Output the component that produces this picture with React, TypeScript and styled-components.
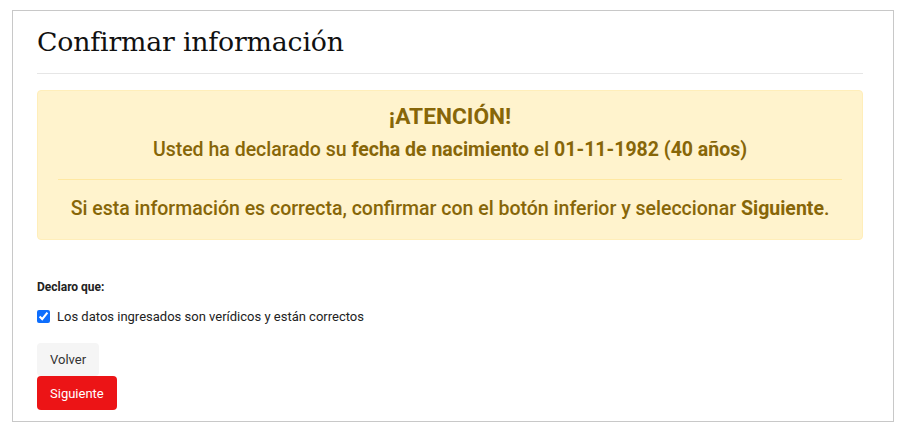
import * as React from "react"
import styled, { createGlobalStyle } from "styled-components"

const Global = createGlobalStyle`
  body {
    margin: 0;
    background: #fff;
    font-family: Roboto, "Liberation Sans", Arial, sans-serif;
  }
`

const Page = styled.div`
  padding: 10px 21px 0 12px;
`

const Card = styled.div`
  border: 1px solid #c8c8c8;
  padding: 11px 30px 9px 24px;
  height: 412px;
  box-sizing: border-box;
`

const Title = styled.h1`
  margin: 0;
  font-family: "DejaVu Serif", "Liberation Serif", serif;
  font-weight: 400;
  font-size: 26.8px;
  line-height: 40px;
  color: #111;
  letter-spacing: -0.2px;
`

const Rule = styled.hr`
  margin: 11px 0 16px;
  border: 0;
  border-top: 1px solid #e6e6e6;
`

const Alert = styled.div`
  background: #fff3cd;
  border: 1px solid #ffeeba;
  border-radius: 4px;
  color: #876608;
  padding: 11px 20px 20px;
  text-align: center;
  height: 150px;
  box-sizing: border-box;
`

const AlertHeading = styled.div`
  font-size: 22.7px;
  font-weight: 700;
  line-height: 30px;
`

const AlertLine = styled.div`
  font-size: 19.5px;
  font-weight: 500;
  line-height: 28px;
  margin-top: 4px;

  b {
    font-weight: 700;
  }
`

const AlertRule = styled.hr`
  margin: 15px 0 15px;
  border: 0;
  border-top: 1px solid #ffe8a1;
`

const Declare = styled.div`
  margin-top: 40px;
  font-size: 12px;
  font-weight: 700;
  color: #222;
`

const CheckRow = styled.label`
  display: flex;
  align-items: center;
  gap: 7px;
  margin-top: 15px;
  font-size: 13px;
  color: #222;

  input {
    margin: 0;
    width: 13px;
    height: 13px;
    accent-color: #0d6efd;
  }
`

const Actions = styled.div`
  display: flex;
  flex-direction: column;
  align-items: flex-start;
  margin-top: 19px;
`

const Button = styled.button<{ $primary?: boolean }>`
  font-family: Roboto, "Liberation Sans", Arial, sans-serif;
  font-size: 13px;
  border: 0;
  border-radius: 4px;
  padding: 0 13px;
  height: ${(p) => (p.$primary ? "34px" : "33px")};
  background: ${(p) => (p.$primary ? "#ec1416" : "#f5f5f5")};
  color: ${(p) => (p.$primary ? "#fff" : "#333")};
  cursor: pointer;
`

export default function App() {
  return (
    <Page>
      <Global />
      <Card>
        <Title>Confirmar información</Title>
        <Rule />
        <Alert>
          <AlertHeading>¡ATENCIÓN!</AlertHeading>
          <AlertLine>
            Usted ha declarado su <b>fecha de nacimiento</b> el <b>01-11-1982 (40 años)</b>
          </AlertLine>
          <AlertRule />
          <AlertLine>
            Si esta información es correcta, confirmar con el botón inferior y seleccionar{" "}
            <b>Siguiente</b>.
          </AlertLine>
        </Alert>
        <Declare>Declaro que:</Declare>
        <CheckRow>
          <input type="checkbox" defaultChecked />
          Los datos ingresados son verídicos y están correctos
        </CheckRow>
        <Actions>
          <Button>Volver</Button>
          <Button $primary>Siguiente</Button>
        </Actions>
      </Card>
    </Page>
  )
}
